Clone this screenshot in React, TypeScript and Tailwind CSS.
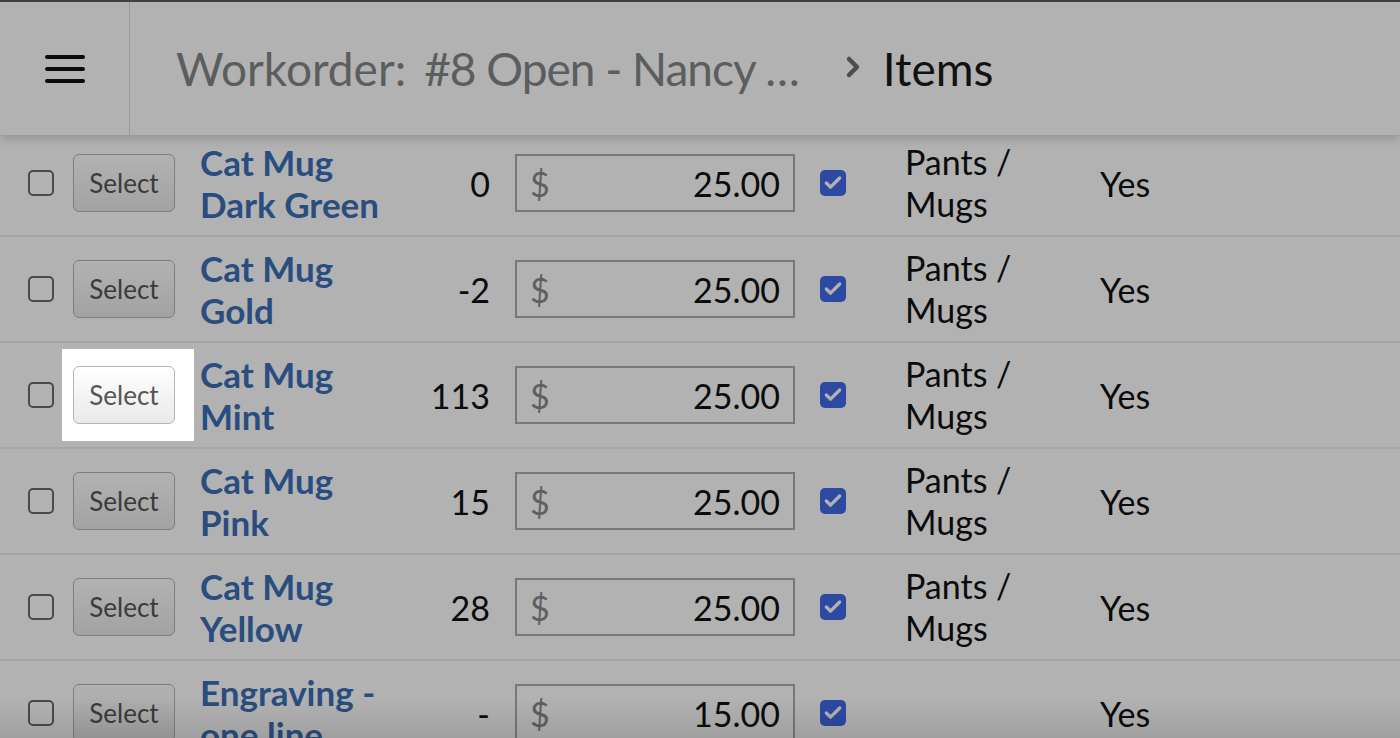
import { Check } from "lucide-react";

type Item = {
  name: string;
  qty: string;
  price: string;
  category: string;
  taxable: string;
  highlight?: boolean;
};

const items: Item[] = [
  { name: "Cat Mug Dark Green", qty: "0", price: "25.00", category: "Pants / Mugs", taxable: "Yes" },
  { name: "Cat Mug Gold", qty: "-2", price: "25.00", category: "Pants / Mugs", taxable: "Yes" },
  { name: "Cat Mug Mint", qty: "113", price: "25.00", category: "Pants / Mugs", taxable: "Yes", highlight: true },
  { name: "Cat Mug Pink", qty: "15", price: "25.00", category: "Pants / Mugs", taxable: "Yes" },
  { name: "Cat Mug Yellow", qty: "28", price: "25.00", category: "Pants / Mugs", taxable: "Yes" },
  { name: "Engraving - one line", qty: "-", price: "15.00", category: "", taxable: "Yes" },
];

function Header() {
  return (
    <header className="relative z-10 flex h-[135px] shrink-0 border-t-2 border-[#5c5c5c] bg-white shadow-[0_4px_10px_rgba(0,0,0,0.18)]">
      <div className="flex w-[130px] shrink-0 items-center justify-center border-r border-[#dcdcdc]">
        <div className="flex w-[40px] flex-col gap-[8px]">
          <span className="h-[4px] rounded-full bg-[#111]" />
          <span className="h-[4px] rounded-full bg-[#111]" />
          <span className="h-[4px] rounded-full bg-[#111]" />
        </div>
      </div>
      <div className="flex items-center pl-[46px] text-[46px] leading-none">
        <span className="text-[#828787]">Workorder:</span>
        <span className="ml-[18px] tracking-[-1px] text-[#828787]">#8 Open - Nancy …</span>
        <svg className="ml-[46px] mt-[-4px]" width="16" height="24" viewBox="0 0 16 24" fill="none">
          <path d="M4 4l8 8-8 8" stroke="#6f6f6f" strokeWidth="4.5" strokeLinecap="round" strokeLinejoin="round" />
        </svg>
        <span className="ml-[22px] text-[#1a1a1a]">Items</span>
      </div>
    </header>
  );
}

function Row({ item }: { item: Item }) {
  return (
    <div className="flex h-[106px] shrink-0 items-center border-b-2 border-[#ececec] pl-[28px] text-[34px] text-[#111]">
      <span className="h-[26px] w-[26px] shrink-0 rounded-[5px] border-2 border-[#6b6b6b] bg-white" />
      <div className="relative ml-[19px] shrink-0">
        {item.highlight && (
          <div className="pointer-events-none absolute -left-[11px] -top-[17px] z-50 h-[92px] w-[132px] shadow-[0_0_0_3000px_rgba(0,0,0,0.3)]" />
        )}
        <button className="flex h-[58px] w-[102px] items-center justify-center rounded-[6px] border-[1.5px] border-[#b5b5b5] bg-gradient-to-b from-white to-[#e9e9e9] text-[26px] text-[#555]">
          Select
        </button>
      </div>
      <div className="ml-[25px] w-[200px] shrink-0 text-[35px] font-bold leading-[42px] text-[#3c6fb7]">
        {item.name}
      </div>
      <div className="w-[90px] shrink-0 text-right">{item.qty}</div>
      <div className="ml-[25px] flex h-[58px] w-[280px] shrink-0 items-center justify-between border-2 border-[#adadad] bg-white px-[13px]">
        <span className="text-[#888]">$</span>
        <span>{item.price}</span>
      </div>
      <span className="ml-[25px] flex h-[26px] w-[26px] shrink-0 items-center justify-center rounded-[5px] bg-[#3f6ae8]">
        <Check className="h-[20px] w-[20px] text-white" strokeWidth={4} />
      </span>
      <div className="ml-[59px] w-[150px] shrink-0 leading-[42px]">{item.category}</div>
      <div className="ml-[45px]">{item.taxable}</div>
    </div>
  );
}

export default function App() {
  return (
    <div className="relative flex h-[738px] w-full flex-col overflow-hidden bg-white font-['Lato',sans-serif]">
      <Header />
      <main className="-mt-[4px] flex flex-col">
        {items.map((item) => (
          <Row key={item.name} item={item} />
        ))}
      </main>
      <div className="pointer-events-none absolute bottom-0 left-0 right-0 z-40 h-[40px] bg-gradient-to-t from-black/10 to-transparent" />
    </div>
  );
}
